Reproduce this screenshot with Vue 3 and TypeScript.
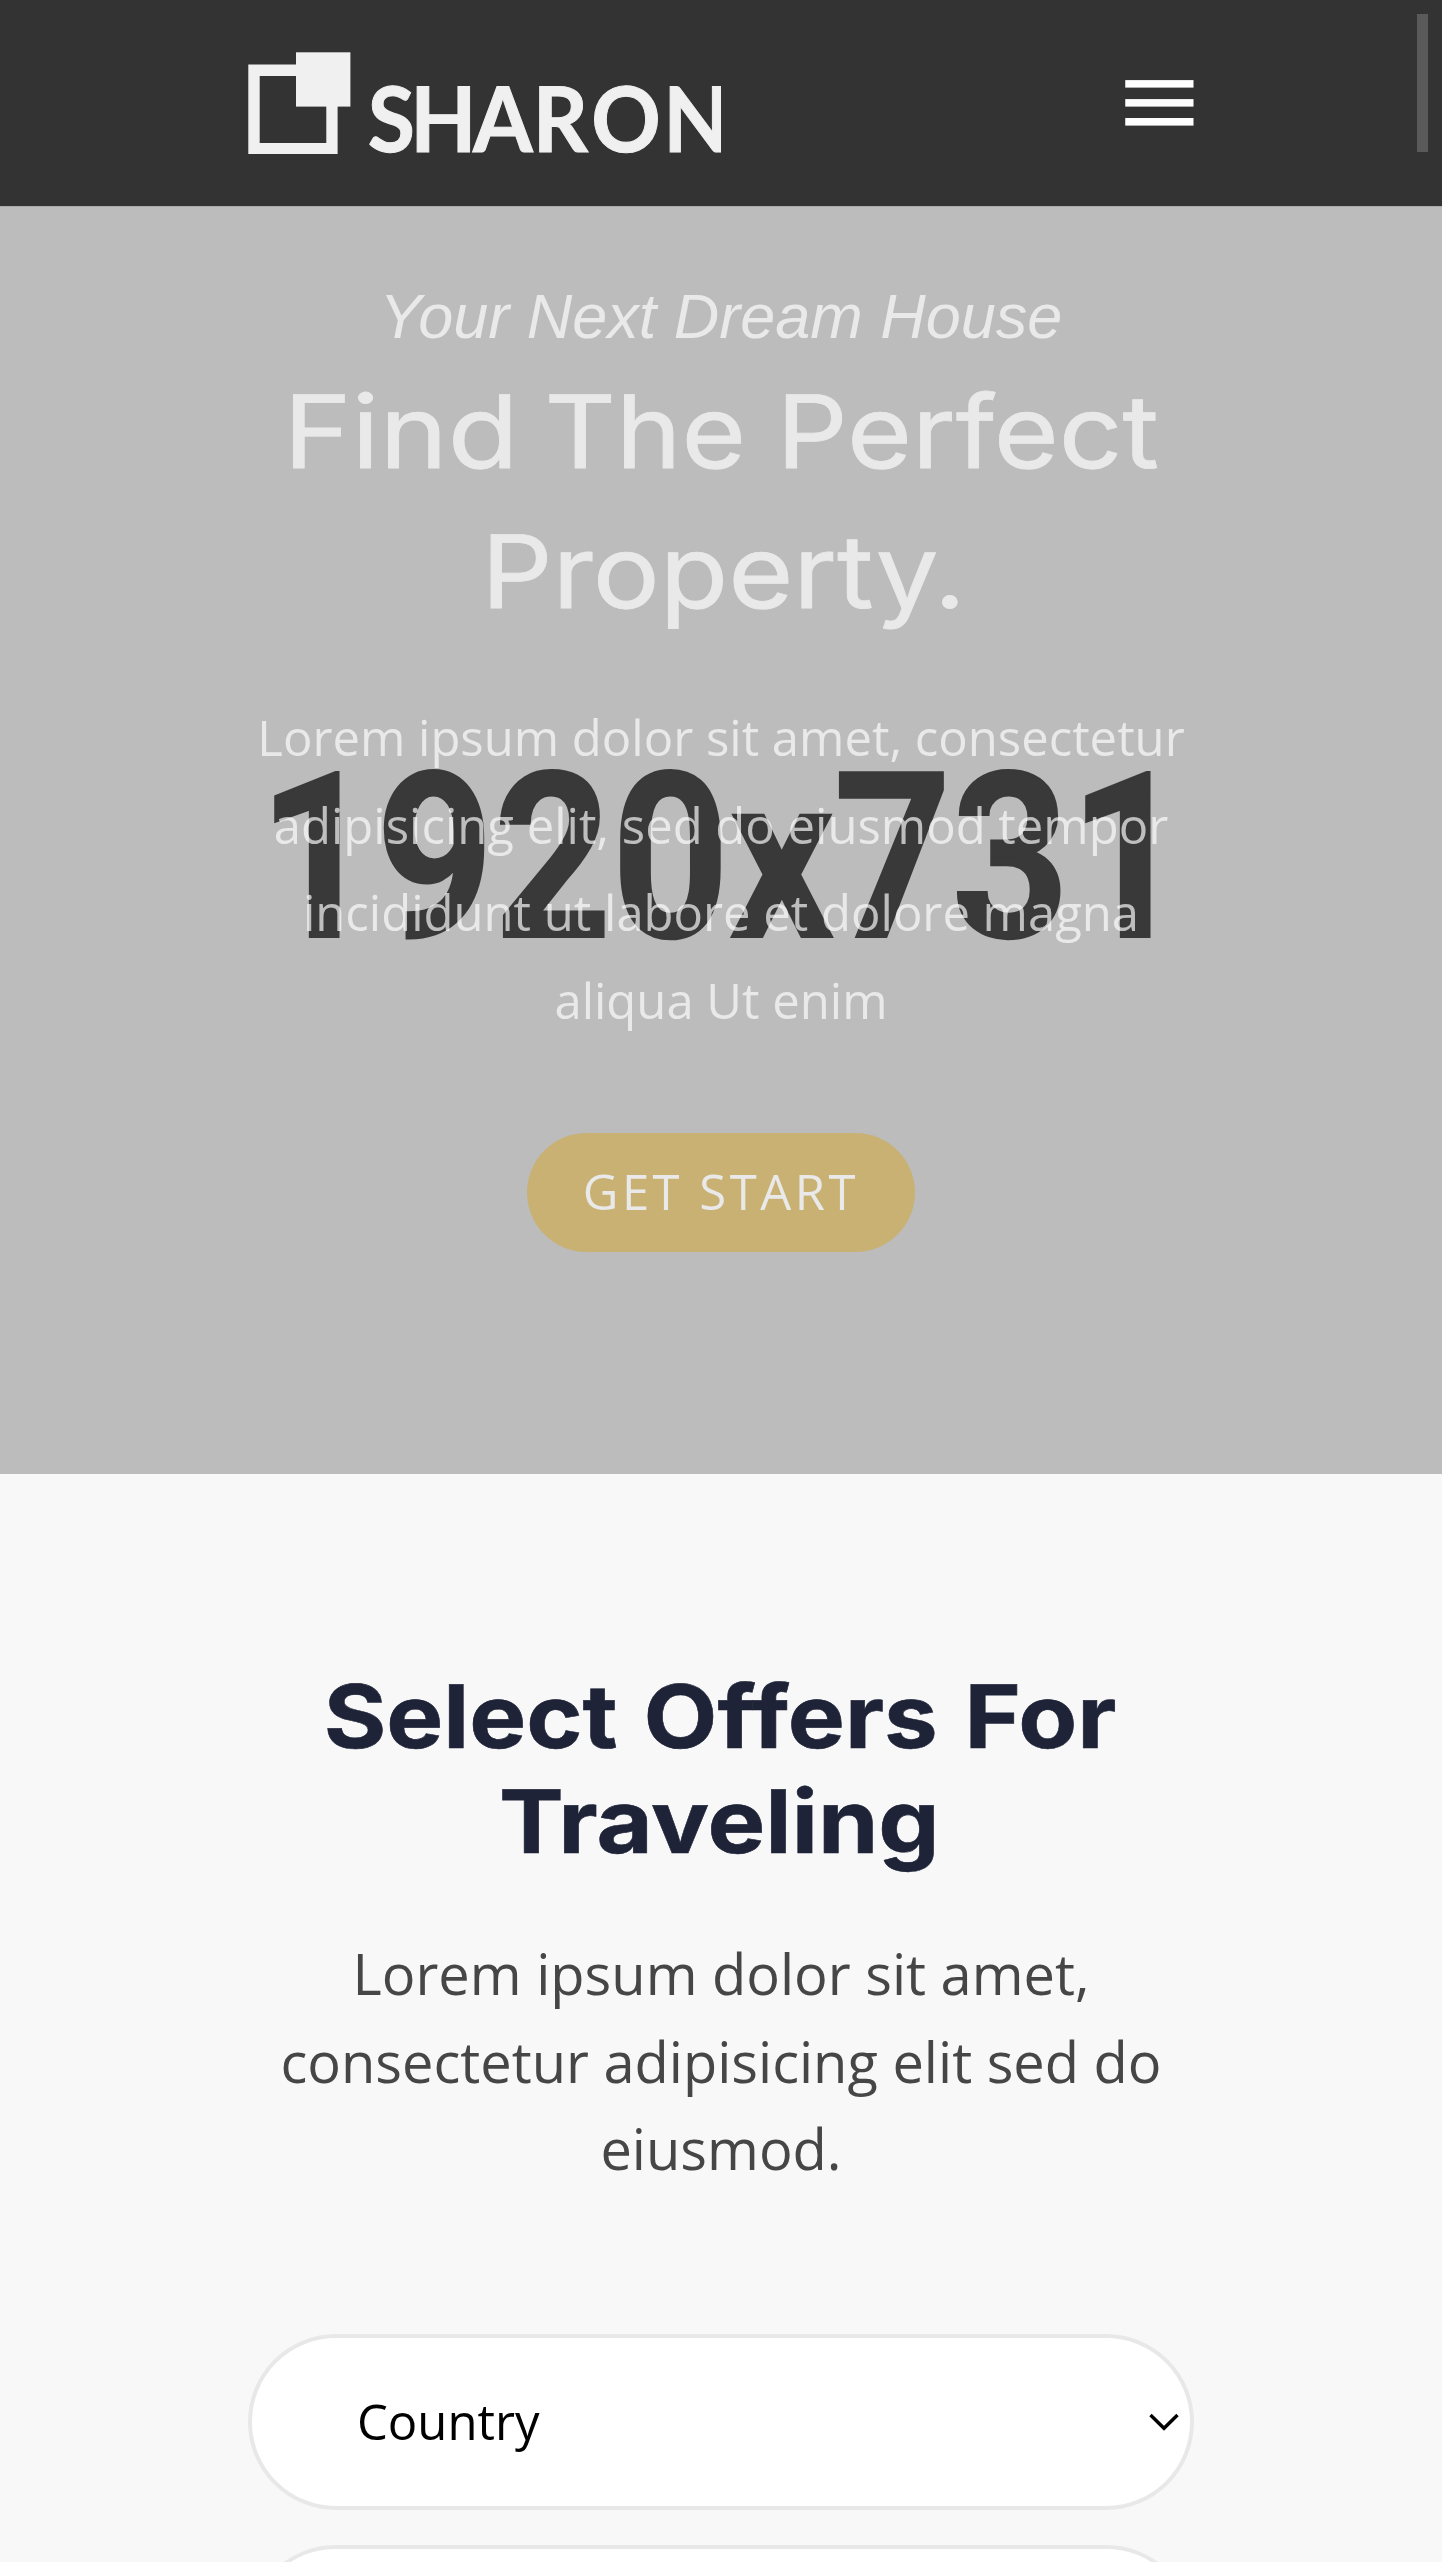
<script setup lang="ts">
interface Word {
  text: string
  left: number
  right: number
  baseline: number
}

const ctx = document.createElement('canvas').getContext('2d')!

// Stretches a word horizontally so its ink runs from left to right.
function fit(word: Word, font: string): string {
  ctx.font = font
  const m = ctx.measureText(word.text)
  const scale = (word.right - word.left) / (m.actualBoundingBoxLeft + m.actualBoundingBoxRight)
  const x = word.left + m.actualBoundingBoxLeft * scale
  return `translate(${x.toFixed(2)} ${word.baseline}) scale(${scale.toFixed(4)} 1)`
}

// Centres every letter's ink on its own position, in horizontally scaled units.
function letterPositions(text: string, centers: number[], font: string, scale: number): string {
  ctx.font = font
  return [...text]
    .map((ch, i) => {
      const m = ctx.measureText(ch)
      return (centers[i] / scale - (m.actualBoundingBoxRight - m.actualBoundingBoxLeft) / 2).toFixed(2)
    })
    .join(' ')
}

const heroFont = '400 101.2px Inter'
const headingFont = '700 87.6px Inter'
const sizeFont = '700 231.6px Roboto'

const heroWords: Word[] = [
  { text: 'Find', left: 292.3, right: 510.7, baseline: 108 },
  { text: 'The', left: 549, right: 741.7, baseline: 108 },
  { text: 'Perfect', left: 785.3, right: 1157.7, baseline: 108 },
  { text: 'Property.', left: 490, right: 958, baseline: 248 },
]
const headingWords: Word[] = [
  { text: 'Select', left: 327, right: 616.3, baseline: 75 },
  { text: 'Offers', left: 648, right: 934.4, baseline: 75 },
  { text: 'For', left: 970, right: 1115.7, baseline: 75 },
  { text: 'Traveling', left: 502.3, right: 933.7, baseline: 180 },
]
const sizeWord: Word = { text: '1920x731', left: 275, right: 1150, baseline: 164.2 }

const brandScale = 0.95
const brandX = letterPositions('SHARON', [391, 443.5, 503, 564, 626, 696.5], '700 90.5px Lato', brandScale)
const heroLines = [
  'Lorem ipsum dolor sit amet, consectetur',
  'adipisicing elit, sed do eiusmod tempor',
  'incididunt ut labore et dolore magna',
  'aliqua Ut enim',
]
const offerLines = ['Lorem ipsum dolor sit amet,', 'consectetur adipisicing elit sed do', 'eiusmod.']
</script>

<template>
  <div class="page">
    <header class="header">
      <svg class="logo" width="473" height="103" viewBox="248 52 473 103">
        <path
          fill="#f0f0f0"
          fill-rule="evenodd"
          d="M248.3 64.5H337.6V154H248.3ZM259.7 76V143H326.3V76Z"
        />
        <rect x="296" y="52.3" width="54.4" height="54.3" fill="#f0f0f0" />
        <text class="brand" :transform="`scale(${brandScale} 1)`" :x="brandX" y="152.3">SHARON</text>
      </svg>
      <svg class="menu" width="69" height="47" viewBox="1125 80 69 47" fill="#fff">
        <rect x="1125.25" y="80.1" width="68.25" height="7.5" />
        <rect x="1125.25" y="99.1" width="68.25" height="7.5" />
        <rect x="1125.25" y="118" width="68.25" height="7.6" />
      </svg>
    </header>
    <div class="scrollbar"></div>

    <section class="hero">
      <svg class="size-mark" width="1442" height="170" viewBox="0 0 1442 170">
        <text class="size-text" :transform="fit(sizeWord, sizeFont)">{{ sizeWord.text }}</text>
      </svg>
      <div class="hero-content">
        <p class="subtitle">Your Next Dream House</p>
        <h1>
          <svg width="1442" height="280" viewBox="0 0 1442 280">
            <text v-for="w in heroWords" :key="w.text" class="hero-word" :transform="fit(w, heroFont)">{{ w.text }}</text>
          </svg>
        </h1>
        <p class="hero-text">
          <span v-for="line in heroLines" :key="line">{{ line }}</span>
        </p>
        <a class="button">GET START</a>
      </div>
    </section>

    <section class="offers">
      <h2>
        <svg width="1442" height="210" viewBox="0 0 1442 210">
          <text v-for="w in headingWords" :key="w.text" class="heading-word" :transform="fit(w, headingFont)">{{ w.text }}</text>
        </svg>
      </h2>
      <p class="offers-text">
        <span v-for="line in offerLines" :key="line">{{ line }}</span>
      </p>
      <div class="field">
        <span>Country</span>
        <svg width="32" height="20" viewBox="0 0 32 20" fill="none" stroke="#000" stroke-width="3.4">
          <path d="M2.5 3 16 16.3 29.5 3" />
        </svg>
      </div>
      <div class="field"></div>
    </section>
  </div>
</template>

<style>
body {
  overflow: hidden;
}
</style>

<style scoped>
.page {
  position: relative;
  width: 1442px;
  height: 2562px;
  overflow: hidden;
  background: #f8f8f8;
  font-family: 'Open Sans', sans-serif;
}
svg {
  display: block;
  flex: none;
}
text {
  text-rendering: geometricPrecision;
}
p,
h1,
h2 {
  margin: 0;
}
.header {
  box-sizing: border-box;
  display: flex;
  justify-content: space-between;
  height: 206px;
  padding: 52px 248px 0;
  background: #333;
}
.menu {
  margin-top: 28px;
}
.brand {
  font: 700 90.5px Lato, sans-serif;
  fill: #f0f0f0;
  stroke: #f0f0f0;
  stroke-width: 1px;
}
.scrollbar {
  position: absolute;
  top: 14px;
  right: 14px;
  width: 10.6px;
  height: 138px;
  background: #5a5a5a;
}
.hero {
  position: relative;
  box-sizing: border-box;
  height: 1267.5px;
  border-top: 1px solid #aaa;
  background: #bcbcbc;
}
.size-mark {
  position: absolute;
  top: 565.7px;
  left: 0;
  overflow: visible;
}
.size-text {
  font: 700 231.6px Roboto, sans-serif;
  fill: #393939;
  stroke: #393939;
  stroke-width: 2px;
}
.hero-content {
  position: relative;
  display: flex;
  flex-direction: column;
  align-items: center;
  padding-top: 65.5px;
  color: #fff;
  opacity: 0.67;
}
.subtitle {
  font: italic 63px/87.5px 'Liberation Sans', sans-serif;
}
.hero-word {
  font: 400 101.2px Inter, sans-serif;
  fill: #fff;
  stroke: #fff;
  stroke-width: 0.8px;
}
.hero-text {
  margin-top: 54.2px;
  font-size: 49px;
  line-height: 87.5px;
  text-align: center;
}
.hero-text span,
.offers-text span {
  display: block;
  white-space: nowrap;
}
.button {
  box-sizing: border-box;
  width: 388.5px;
  height: 119px;
  margin-top: 88.9px;
  padding-left: 56px;
  border-radius: 60px;
  background: #cead4f;
  font-size: 49px;
  line-height: 116px;
  letter-spacing: 3.5px;
  white-space: nowrap;
}
.offers {
  display: flex;
  flex-direction: column;
  align-items: center;
  padding-top: 199.5px;
}
.heading-word {
  font: 700 87.6px Inter, sans-serif;
  fill: #1e2337;
  stroke: #1e2337;
  stroke-width: 0.6px;
}
.offers-text {
  margin: 47.2px 0 141.5px;
  color: #464646;
  font-size: 56px;
  line-height: 87.5px;
  text-align: center;
}
.field {
  box-sizing: border-box;
  display: flex;
  flex: none;
  align-items: center;
  justify-content: space-between;
  width: 946px;
  height: 175.5px;
  margin-bottom: 35px;
  padding: 0 10px 2px 105px;
  border: 4px solid #e8e8e8;
  border-radius: 88px;
  background: #fff;
  color: #000;
  font-size: 49px;
  line-height: 70px;
}
.field svg {
  margin-top: 3px;
}
</style>
